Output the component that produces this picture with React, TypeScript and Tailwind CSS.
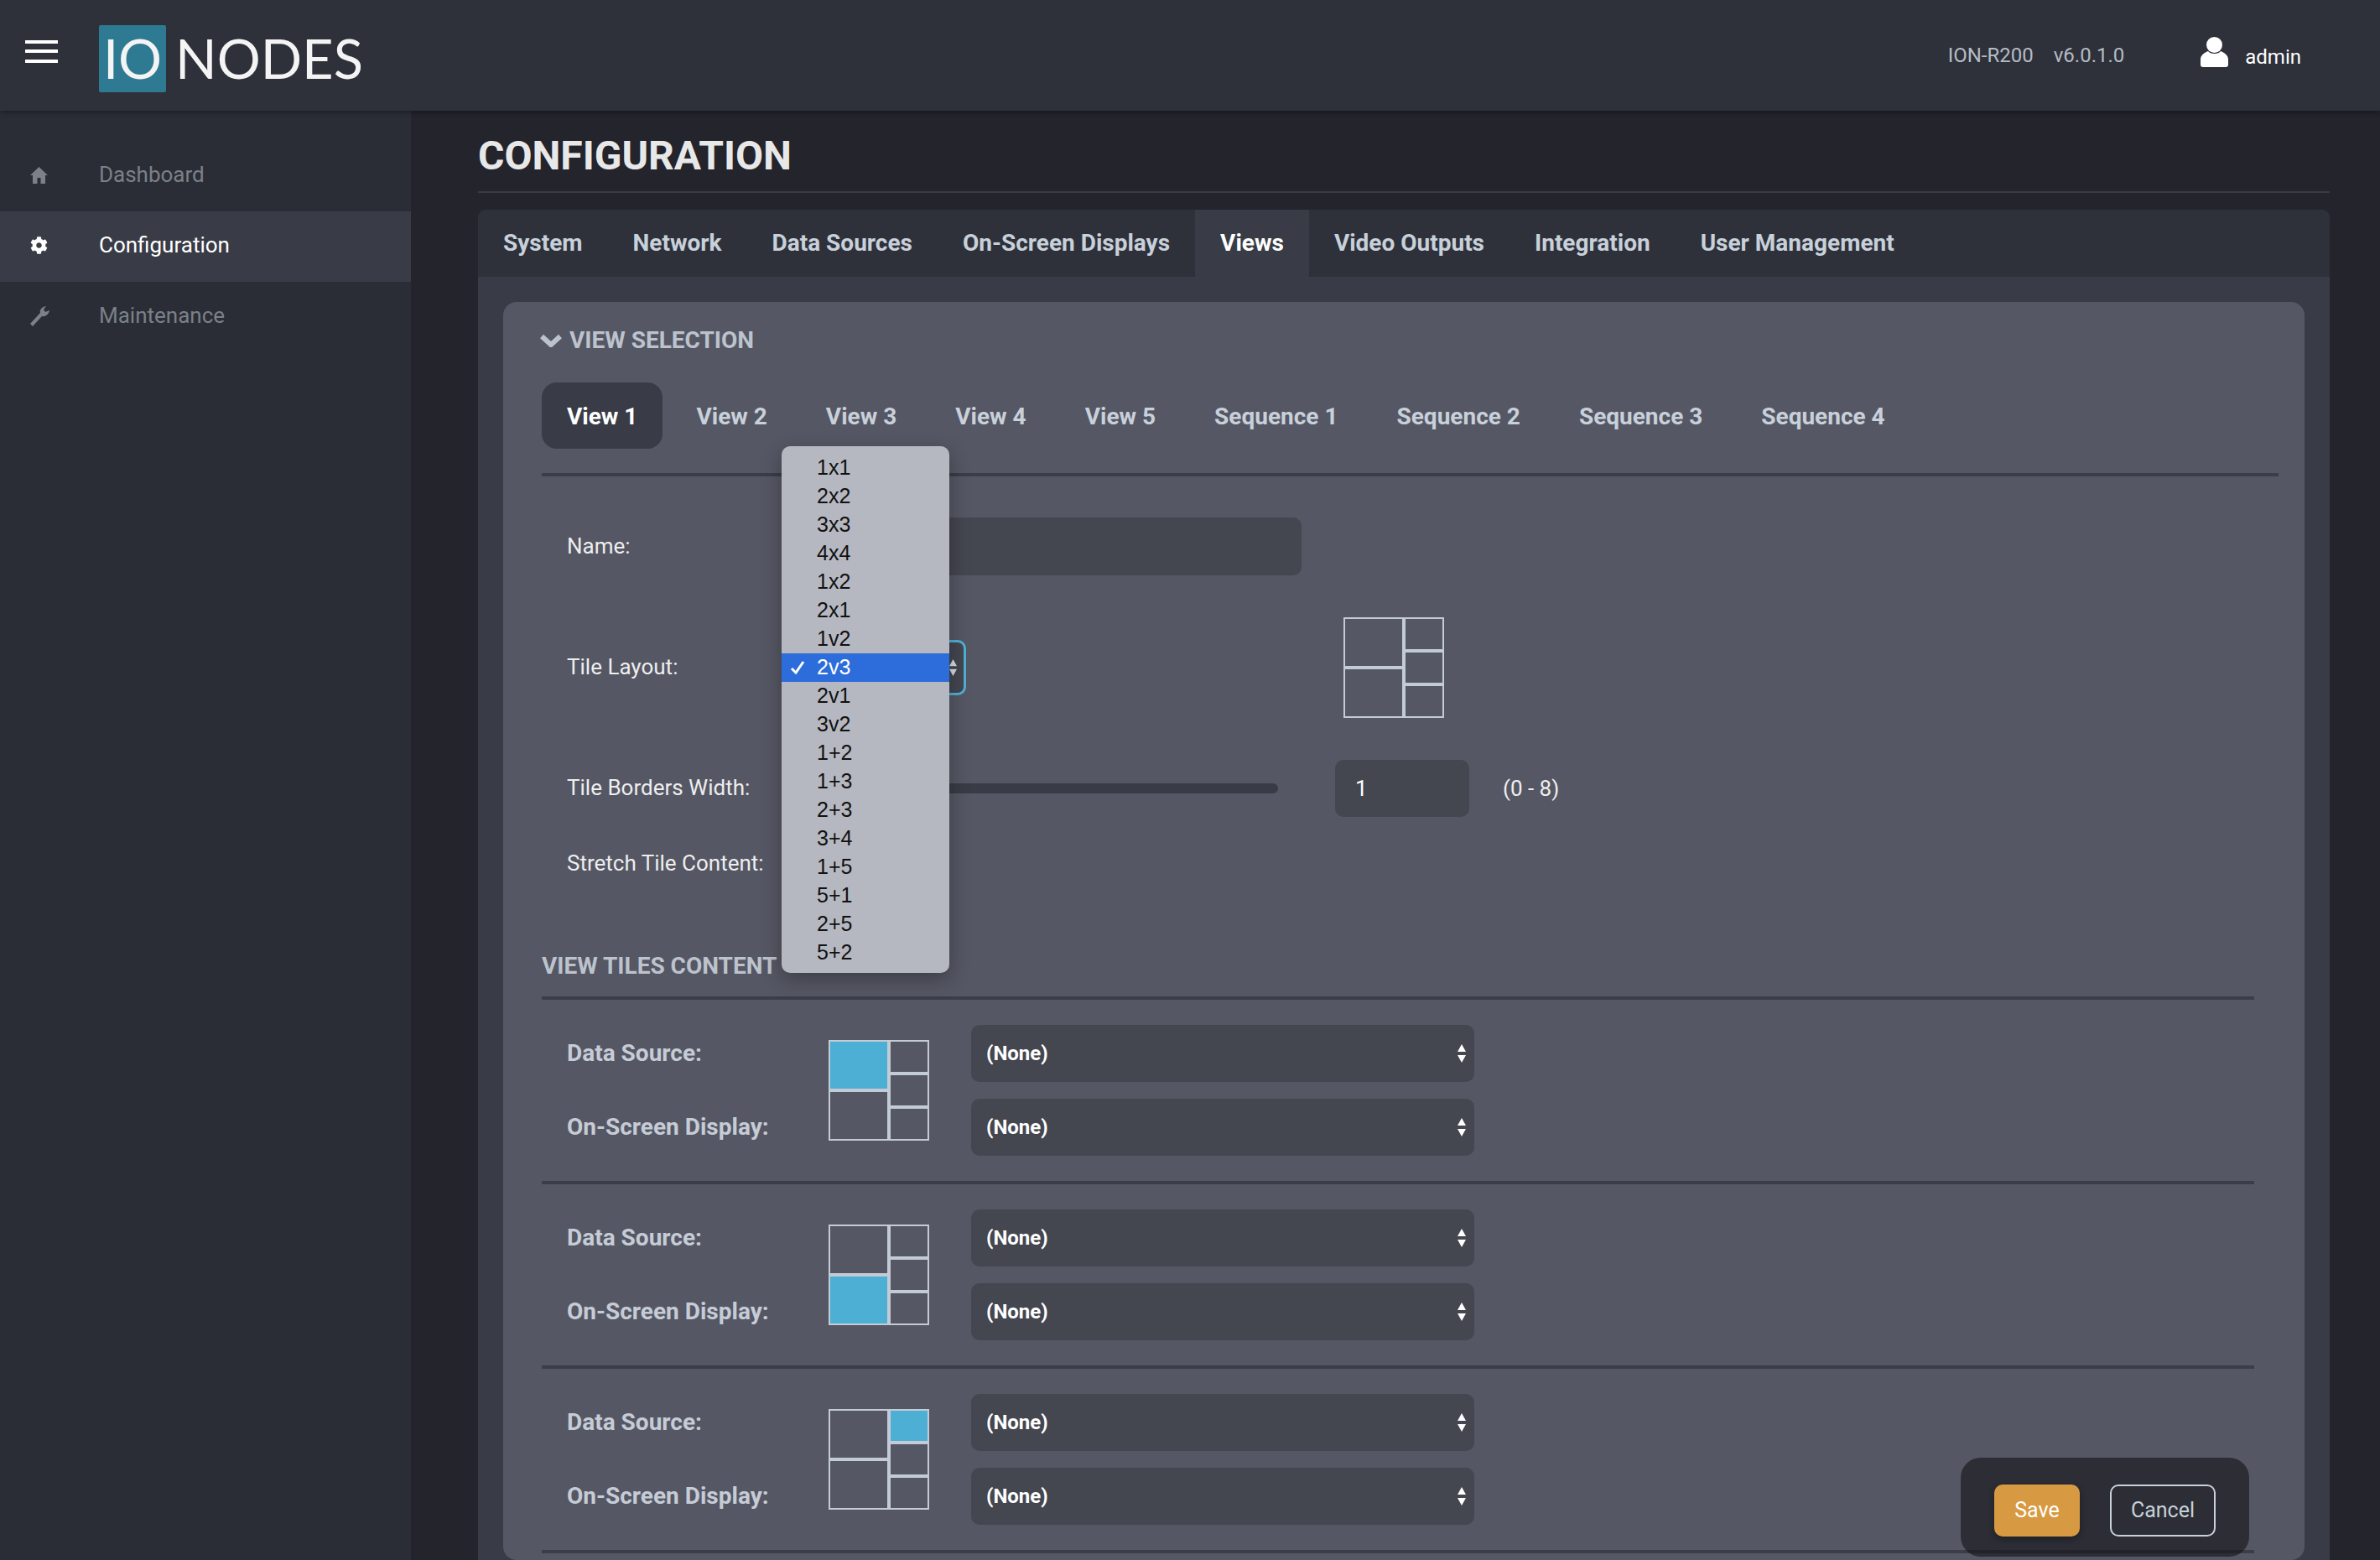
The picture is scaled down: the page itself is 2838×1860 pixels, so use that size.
import React from 'react';
import { FaCog } from 'react-icons/fa';

const mainTabs = ['System', 'Network', 'Data Sources', 'On-Screen Displays', 'Views', 'Video Outputs', 'Integration', 'User Management'];
const viewTabs = ['View 1', 'View 2', 'View 3', 'View 4', 'View 5', 'Sequence 1', 'Sequence 2', 'Sequence 3', 'Sequence 4'];
const layouts = ['1x1', '2x2', '3x3', '4x4', '1x2', '2x1', '1v2', '2v3', '2v1', '3v2', '1+2', '1+3', '2+3', '3+4', '1+5', '5+1', '2+5', '5+2'];

const Arrows: React.FC<{ className?: string }> = ({ className }) => (
  <svg viewBox="0 0 10 22" className={className} fill="currentColor">
    <path d="M5 0 L10 9 L0 9 Z M5 22 L0 13 L10 13 Z" />
  </svg>
);

const HomeIcon = () => (
  <svg viewBox="0 0 21 20" className="w-[21px] h-[20px]" fill="#7b8089">
    <path d="M10.5 0 L21 10 L18 10 L18 20 L12.5 20 L12.5 13 L8.5 13 L8.5 20 L3 20 L3 10 L0 10 Z" />
  </svg>
);

const WrenchIcon = () => (
  <svg viewBox="0 0 24 24" className="w-[24px] h-[24px]" fill="#7b8089">
    <path d="M0 21 L12 8 C11 4 14 1 19 0 L16 4 L18 7 L23 5 C22 10 18 13 14 12 L3 24 Z" />
  </svg>
);

const ChevronIcon = () => (
  <svg viewBox="0 0 26 16" className="w-[26px] h-[16px]" fill="none" stroke="#bcc3cc" strokeWidth="6">
    <path d="M2 3 L13 13 L24 3" />
  </svg>
);

const UserIcon = () => (
  <svg viewBox="0 0 33 36" className="w-[33px] h-[36px]" fill="#ffffff">
    <ellipse cx="16.5" cy="9.5" rx="9.5" ry="9.5" />
    <path d="M9 17 C11 21 22 21 24 17 C29 19 33 22 33 27 L33 33 C33 35 32 36 30 36 L3 36 C1 36 0 35 0 33 L0 27 C0 22 4 19 9 17 Z" />
  </svg>
);

// small picture of the 2v3 layout, `active` is the tile lit up in blue
const TilePreview: React.FC<{ active?: number }> = ({ active }) => {
  const cell = (i: number) => (active === i ? 'bg-[#4eafd4]' : '');
  return (
    <div className="w-[120px] h-[120px] border-[2px] border-[#c3ccd6] flex shrink-0">
      <div className="w-[72px] flex flex-col border-r-[4px] border-[#c3ccd6]">
        <div className={`flex-1 border-b-[2px] border-[#c3ccd6] ${cell(0)}`} />
        <div className={`flex-1 border-t-[2px] border-[#c3ccd6] ${cell(1)}`} />
      </div>
      <div className="flex-1 flex flex-col">
        <div className={`flex-1 border-b-[4px] border-[#c3ccd6] ${cell(2)}`} />
        <div className={`flex-1 border-b-[4px] border-[#c3ccd6] ${cell(3)}`} />
        <div className={`flex-1 ${cell(4)}`} />
      </div>
    </div>
  );
};

const NoneSelect = () => (
  <div className="h-[68px] w-[600px] rounded-[10px] bg-[#444650] flex items-center justify-between pl-[18px] pr-[10px] text-white font-bold text-[24px]">
    <span>(None)</span>
    <Arrows className="w-[10px] h-[22px] text-white" />
  </div>
);

const TileRow: React.FC<{ active: number }> = ({ active }) => (
  <div className="border-t-[4px] border-[#3b3e48] w-[2042px] h-[220px] py-[32px] pl-[30px] flex items-center">
    <div className="w-[312px] flex flex-col gap-[20px] font-bold text-[28px] text-[#c5ccd6]">
      <div className="h-[68px] flex items-center">Data Source:</div>
      <div className="h-[68px] flex items-center">On-Screen Display:</div>
    </div>
    <TilePreview active={active} />
    <div className="ml-[50px] flex flex-col gap-[20px]">
      <NoneSelect />
      <NoneSelect />
    </div>
  </div>
);

export default function App() {
  return (
    <div className="relative w-full h-screen overflow-hidden bg-[#23242c] font-['Roboto',sans-serif] flex flex-col">
      <header className="h-[132px] shrink-0 bg-[#2e313a] flex items-center shadow-[0_2px_6px_rgba(0,0,0,0.35)] z-10">
        <div className="ml-[30px] mb-[10px] w-[39px] flex flex-col gap-[7.5px]">
          <div className="h-[4px] bg-white" />
          <div className="h-[4px] bg-white" />
          <div className="h-[4px] bg-white" />
        </div>
        <div className="ml-[49px] mt-[8px] flex items-center font-['Lato',sans-serif] text-[65px] leading-none text-[#f4f4f4]">
          <div className="w-[80px] h-[80px] rounded-[2px] bg-[#2f7a93] flex items-center justify-center pb-[2px]">IO</div>
          <span className="ml-[11px] pb-[2px]">NODES</span>
        </div>
        <div className="ml-auto flex items-center text-[24px] text-[#b5bcc5]">
          <span>ION-R200</span>
          <span className="ml-[24px]">v6.0.1.0</span>
        </div>
        <div className="ml-[91px] mr-[94px] flex items-center text-white text-[24px]">
          <div className="mb-[8px]"><UserIcon /></div>
          <span className="ml-[20px] mt-[4px]">admin</span>
        </div>
      </header>

      <div className="flex flex-1 min-h-0">
        <aside className="w-[490px] shrink-0 bg-[#2a2d35] pt-[36px] text-[26px]">
          <div className="h-[84px] pb-[3px] flex items-center text-[#7b8089]">
            <div className="w-[118px] pl-[36px]"><HomeIcon /></div>
            Dashboard
          </div>
          <div className="h-[84px] pb-[3px] flex items-center text-white bg-[#393c46]">
            <div className="w-[118px] pl-[36px]"><FaCog size={21} /></div>
            Configuration
          </div>
          <div className="h-[84px] pb-[3px] flex items-center text-[#7b8089]">
            <div className="w-[118px] pl-[36px]"><WrenchIcon /></div>
            Maintenance
          </div>
        </aside>

        <main className="flex-1 min-w-0 pl-[80px] pr-[60px] overflow-hidden">
          <h1 className="h-[98px] border-b-[2px] border-[#3a3c45] flex items-center pt-[12px] font-bold text-[48px] text-[#e8e8e8]">CONFIGURATION</h1>
          <div className="mt-[20px] rounded-t-[10px] bg-[#393c46] min-h-[1600px]">
            <nav className="h-[80px] rounded-t-[10px] bg-[#2e313a] flex font-bold text-[28px] text-[#c8d0da]">
              {mainTabs.map(t => (
                <div key={t} className={`flex items-center px-[30px] ${t === 'Views' ? 'bg-[#393c46] text-white' : ''}`}>{t}</div>
              ))}
            </nav>

            <section className="mt-[30px] mx-[30px] rounded-[16px] bg-[#555764] min-h-[1500px] pl-[46px] pr-[31px]">
              <div className="h-[96px] pb-[4px] -ml-[2px] flex items-center font-bold text-[28px] text-[#bcc3cc]">
                <ChevronIcon />
                <span className="ml-[9px]">VIEW SELECTION</span>
              </div>

              <div className="flex font-bold text-[28px] text-[#c8d0da]">
                {viewTabs.map((t, i) => (
                  <div key={t} className={`h-[79px] px-[30px] pt-[2px] mr-[10px] flex items-center rounded-[18px] ${i === 0 ? 'bg-[#393c46] text-white' : ''}`}>{t}</div>
                ))}
              </div>
              <div className="mt-[29px] h-[4px] bg-[#3b3e48]" />

              <div className="pl-[30px] text-[26px] text-[#eeeeee]">
                <div className="mt-[49px] h-[69px] flex items-center">
                  <div className="w-[256px]">Name:</div>
                  <div className="h-[69px] w-[620px] rounded-[10px] bg-[#444650]" />
                </div>

                <div className="mt-[50px] h-[120px] flex items-center">
                  <div className="w-[256px] pb-[2px]">Tile Layout:</div>
                  <div className="h-[66px] w-[220px] rounded-[10px] bg-[#444650] border-[3px] border-[#4fb0d4] flex items-center justify-end pr-[8px]">
                    <Arrows className="w-[9px] h-[22px] text-[#d8dbe0]" />
                  </div>
                  <div className="ml-[450px]"><TilePreview /></div>
                </div>

                <div className="mt-[50px] h-[68px] flex items-center">
                  <div className="w-[256px] pb-[2px]">Tile Borders Width:</div>
                  <div className="h-[12px] w-[592px] rounded-[6px] bg-[#393c46]" />
                  <div className="ml-[68px] h-[68px] w-[160px] rounded-[10px] bg-[#444650] flex items-center pl-[24px] text-white">1</div>
                  <div className="ml-[40px]">(0 - 8)</div>
                </div>

                <div className="mt-[36px] h-[40px] pb-[2px] flex items-center">Stretch Tile Content:</div>
              </div>

              <div className="mt-[84px] h-[36px] flex items-center font-bold text-[28px] text-[#bcc3cc]">VIEW TILES CONTENT</div>
              <div className="mt-[18px]">
                <TileRow active={0} />
                <TileRow active={1} />
                <TileRow active={2} />
                <div className="w-[2042px] h-[4px] bg-[#3b3e48]" />
              </div>
            </section>
          </div>
        </main>
      </div>

      {/* native select popup, open over the form */}
      <div className="absolute left-[932px] top-[532px] w-[200px] h-[628px] pt-[9px] rounded-[10px] bg-[#b6b8c1] shadow-[0_8px_24px_rgba(0,0,0,0.3)] font-['Liberation_Sans',sans-serif] text-[25px] text-[#111111] z-20">
        {layouts.map(l => (
          <div key={l} className={`h-[34px] relative flex items-center pl-[42px] ${l === '2v3' ? 'bg-[#2d6cdb] text-white' : ''}`}>
            {l === '2v3' && (
              <svg viewBox="0 0 18 16" className="absolute left-[10px] top-[9px] w-[18px] h-[16px]" fill="none" stroke="#ffffff" strokeWidth="3">
                <path d="M2 9 L7 14 L16 1" />
              </svg>
            )}
            {l}
          </div>
        ))}
      </div>

      <div className="absolute left-[2338px] top-[1738px] w-[344px] h-[118px] rounded-[24px] bg-[#141419]/[0.62] flex items-start pt-[32px] pl-[40px] text-[25px] z-20">
        <div className="w-[102px] h-[62px] rounded-[10px] bg-[#d79a42] text-white flex items-center justify-center shadow-[0_3px_8px_rgba(0,0,0,0.3)]">Save</div>
        <div className="ml-[36px] w-[126px] h-[62px] rounded-[10px] border-[2px] border-[#c8d0da] text-[#c8d0da] flex items-center justify-center">Cancel</div>
      </div>
    </div>
  );
}
